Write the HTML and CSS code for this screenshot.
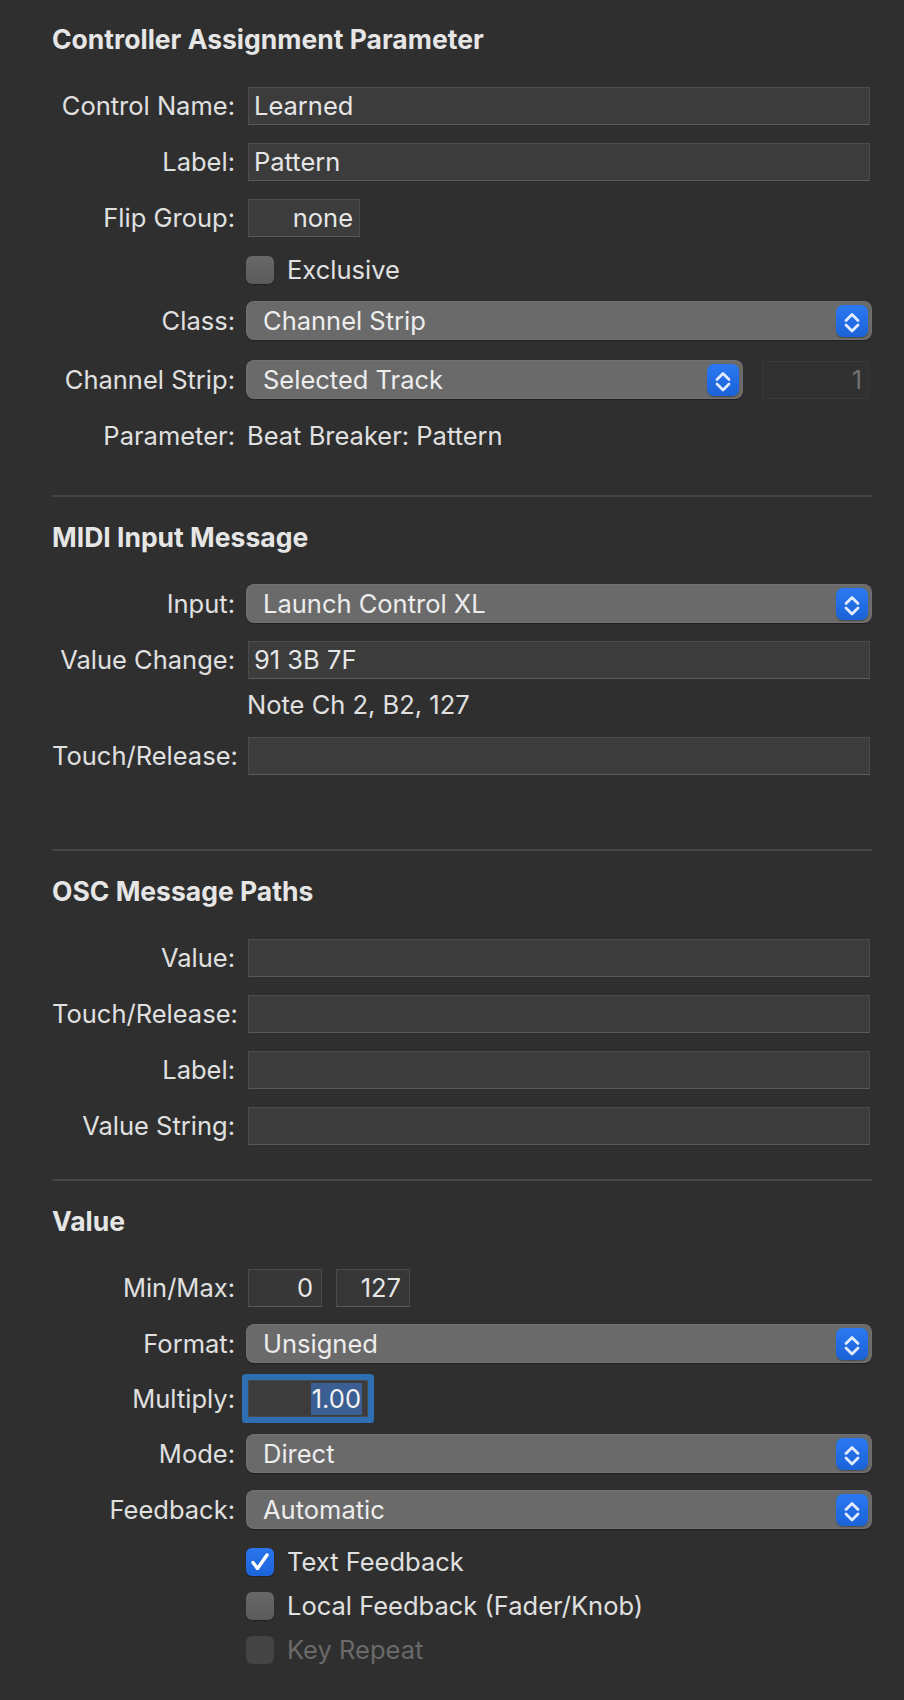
FILE: index.html
```html
<!DOCTYPE html>
<html lang="en">
<head>
    <meta charset="UTF-8">
    <meta name="viewport" content="width=device-width, initial-scale=1.0">
    <title>Controller Assignment</title>
    <link rel="stylesheet" href="styles.css">
</head>
<body>
    <div class="panel">
        <section class="group">
            <h2 class="group-title">Controller Assignment Parameter</h2>
            <div class="row"><span class="label">Control Name:</span><div class="field">Learned</div></div>
            <div class="row"><span class="label">Label:</span><div class="field">Pattern</div></div>
            <div class="row"><span class="label">Flip Group:</span><div class="field field-flip">none</div></div>
            <div class="row check">
                <label class="checkbox"><span class="box"></span>Exclusive</label>
            </div>
            <div class="row">
                <span class="label">Class:</span>
                <div class="popup">Channel Strip<span class="stepper"><svg viewBox="0 0 32 32"><path d="M10 15.5l6-6 6 6M10 20l6 6 6-6"/></svg></span></div>
            </div>
            <div class="row spaced">
                <span class="label">Channel Strip:</span>
                <div class="split">
                    <div class="popup">Selected Track<span class="stepper"><svg viewBox="0 0 32 32"><path d="M10 15.5l6-6 6 6M10 20l6 6 6-6"/></svg></span></div>
                    <div class="field field-num dim">1</div>
                </div>
            </div>
            <div class="row info param"><span class="label">Parameter:</span><span class="value">Beat Breaker: Pattern</span></div>
        </section>

        <section class="group group-midi">
            <h2 class="group-title">MIDI Input Message</h2>
            <div class="row">
                <span class="label">Input:</span>
                <div class="popup">Launch Control XL<span class="stepper"><svg viewBox="0 0 32 32"><path d="M10 15.5l6-6 6 6M10 20l6 6 6-6"/></svg></span></div>
            </div>
            <div class="row"><span class="label">Value Change:</span><div class="field">91 3B 7F</div></div>
            <div class="row info"><span class="value">Note Ch 2, B2, 127</span></div>
            <div class="row"><span class="label">Touch/Release:</span><div class="field"></div></div>
        </section>

        <section class="group group-osc">
            <h2 class="group-title">OSC Message Paths</h2>
            <div class="row"><span class="label">Value:</span><div class="field"></div></div>
            <div class="row"><span class="label">Touch/Release:</span><div class="field"></div></div>
            <div class="row"><span class="label">Label:</span><div class="field"></div></div>
            <div class="row"><span class="label">Value String:</span><div class="field"></div></div>
        </section>

        <section class="group">
            <h2 class="group-title">Value</h2>
            <div class="row">
                <span class="label">Min/Max:</span>
                <div class="pair">
                    <div class="field field-small">0</div>
                    <div class="field field-small">127</div>
                </div>
            </div>
            <div class="row">
                <span class="label">Format:</span>
                <div class="popup">Unsigned<span class="stepper"><svg viewBox="0 0 32 32"><path d="M10 15.5l6-6 6 6M10 20l6 6 6-6"/></svg></span></div>
            </div>
            <div class="row short">
                <span class="label">Multiply:</span>
                <div class="field field-focus"><span class="selection">1.00</span></div>
            </div>
            <div class="row">
                <span class="label">Mode:</span>
                <div class="popup">Direct<span class="stepper"><svg viewBox="0 0 32 32"><path d="M10 15.5l6-6 6 6M10 20l6 6 6-6"/></svg></span></div>
            </div>
            <div class="row">
                <span class="label">Feedback:</span>
                <div class="popup">Automatic<span class="stepper"><svg viewBox="0 0 32 32"><path d="M10 15.5l6-6 6 6M10 20l6 6 6-6"/></svg></span></div>
            </div>
            <div class="row check">
                <label class="checkbox"><span class="box checked"><svg viewBox="0 0 28 28"><path d="M7 14.5l4.5 6L21 7"/></svg></span>Text Feedback</label>
            </div>
            <div class="row check">
                <label class="checkbox"><span class="box"></span>Local Feedback (Fader/Knob)</label>
            </div>
            <div class="row check">
                <label class="checkbox disabled"><span class="box"></span>Key Repeat</label>
            </div>
        </section>
    </div>
</body>
</html>
```

FILE: styles.css
```css
body {
    margin: 0;
    background: #2f2f2f;
    color: #e0e0e0;
    font-family: Inter, "Noto Sans", sans-serif;
    font-size: 25.5px;
    min-height: 1700px;
}
.panel {
    padding: 0 32px 0 52px;
}
.group {
    padding: 25px 0 34px;
}
.group:first-child {
    padding-top: 24px;
    padding-bottom: 45px;
}
.group + .group {
    border-top: 2px solid #464646;
}
.group-midi {
    padding-bottom: 74px;
}
.group-title {
    margin: 0 0 32px;
    font-size: 26.5px;
    line-height: 30px;
    font-weight: 700;
    color: #e6e6e6;
}
.row {
    display: grid;
    grid-template-columns: 183px 1fr;
    column-gap: 13px;
    align-items: center;
    height: 39px;
    margin-top: 17px;
}
.group-title + .row {
    margin-top: 0;
}
.row.spaced {
    margin-top: 20px;
}
.row.short {
    height: 37px;
}
.row.check {
    height: 28px;
    margin-top: 19px;
}
.row.check + .row.check {
    margin-top: 16px;
}
.row.info {
    height: 28px;
    margin-top: 12px;
}
.row.param {
    margin-top: 23px;
}
.label {
    grid-column: 1;
    text-align: right;
    white-space: nowrap;
    line-height: 28px;
}
.value {
    grid-column: 2;
    margin-left: -1px;
    line-height: 28px;
}
.field {
    grid-column: 2;
    box-sizing: border-box;
    height: 38px;
    margin-right: 2px;
    padding: 0 6px 0 5px;
    display: flex;
    align-items: center;
    background: #3c3c3c;
    border: 1px solid #4b4b4b;
    border-bottom-color: #5a5a5a;
    color: #e6e6e6;
    line-height: 28px;
}
.field-flip {
    width: 112px;
    justify-content: flex-end;
}
.field-small {
    width: 74px;
    justify-content: flex-end;
    padding-right: 8px;
    background: #373737;
}
.field-num {
    width: 107px;
    justify-content: flex-end;
    padding-right: 6px;
    margin-right: 3px;
    background: #313131;
    border-color: #393939;
}
.dim {
    color: #707070;
}
.field-focus {
    width: 120px;
    height: 37px;
    justify-content: flex-end;
    padding-right: 5px;
    border-color: #4a4a4a;
    border-radius: 1px;
    box-shadow: 0 0 0 6px #2d6fb0;
}
.selection {
    background: #3c5f93;
    color: #f2f2f2;
    padding: 2px 1px;
}
.pair {
    display: flex;
    gap: 12px;
}
.split {
    display: flex;
    align-items: center;
    gap: 19px;
}
.split .popup {
    flex: 1;
}
.popup {
    grid-column: 2;
    box-sizing: border-box;
    height: 39px;
    margin-left: -2px;
    padding: 0 4px 0 17px;
    display: flex;
    align-items: center;
    justify-content: space-between;
    background: #6a6a6a;
    border-radius: 8px;
    box-shadow: 0 1px 1px rgba(0, 0, 0, 0.35), inset 0 0 0 1px rgba(255, 255, 255, 0.05);
    color: #ededed;
    line-height: 28px;
}
.stepper {
    width: 32px;
    height: 32px;
    border-radius: 7px;
    background: linear-gradient(#2b79f2, #1b62d8);
    box-shadow: 0 1px 1px rgba(0, 0, 0, 0.3);
}
.stepper svg {
    display: block;
    width: 32px;
    height: 32px;
}
.stepper path {
    fill: none;
    stroke: #e3ecff;
    stroke-width: 2.8;
    stroke-linecap: round;
    stroke-linejoin: round;
}
.checkbox {
    grid-column: 2;
    margin-left: -2px;
    display: flex;
    align-items: center;
    gap: 13px;
    line-height: 28px;
    white-space: nowrap;
}
.box {
    width: 28px;
    height: 28px;
    box-sizing: border-box;
    border-radius: 6px;
    background: linear-gradient(#676767, #5b5b5b);
    box-shadow: 0 1px 1px rgba(0, 0, 0, 0.3);
}
.box.checked {
    background: linear-gradient(#2a75ee, #1c63d9);
}
.box svg {
    display: block;
    width: 28px;
    height: 28px;
}
.box path {
    fill: none;
    stroke: #ffffff;
    stroke-width: 3.4;
    stroke-linecap: round;
    stroke-linejoin: round;
}
.checkbox.disabled {
    color: #6a6a6a;
}
.checkbox.disabled .box {
    background: #444444;
    box-shadow: none;
}
```
